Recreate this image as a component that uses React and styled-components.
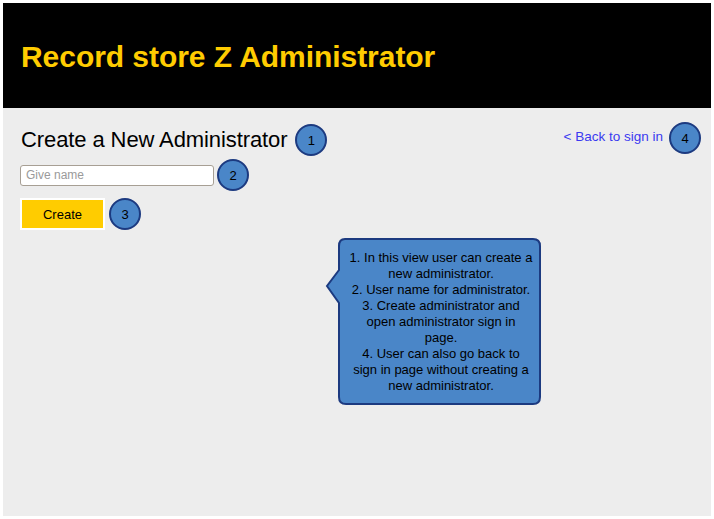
import React from 'react';
import styled, { createGlobalStyle } from 'styled-components';

const GlobalStyle = createGlobalStyle`
  html, body {
    margin: 0;
    padding: 0;
    background: #ffffff;
    font-family: "Liberation Sans", Arial, sans-serif;
  }
`;

const Page = styled.div`
  margin: 3px;
  width: 708px;
  height: 513px;
  background: #ededed;
  display: flex;
  flex-direction: column;
`;

const Header = styled.header`
  height: 105px;
  background: #000000;
  display: flex;
  align-items: center;
  padding: 0 18px;
`;

const Title = styled.h1`
  margin: 0;
  padding-top: 3px;
  color: #ffcc00;
  font-size: 30px;
  font-weight: bold;
  letter-spacing: -0.05px;
`;

const Main = styled.main`
  position: relative;
  flex: 1;
  padding: 14px 10px 0 17px;
`;

const TopRow = styled.div`
  display: flex;
  justify-content: space-between;
  align-items: flex-start;
`;

const Group = styled.div`
  display: flex;
  align-items: center;
  gap: ${p => p.gap || 8}px;
  margin-top: ${p => p.top || 0}px;
`;

const Heading = styled.h2`
  margin: 0 0 0 1px;
  font-size: 22px;
  font-weight: normal;
  letter-spacing: -0.1px;
  color: #000000;
`;

const Badge = styled.span`
  box-sizing: border-box;
  width: 32px;
  height: 32px;
  border-radius: 50%;
  background: #4a86c8;
  border: 2px solid #1c3a80;
  display: inline-flex;
  align-items: center;
  justify-content: center;
  font-size: 13px;
  color: #000000;
  flex-shrink: 0;
`;

const BackLink = styled.a`
  color: #3a3af0;
  font-size: 13.5px;
  text-decoration: none;
  cursor: pointer;
  margin-top: -3px;
`;

const NameInput = styled.input`
  box-sizing: border-box;
  width: 194px;
  height: 21px;
  border: 1px solid #a79f94;
  border-radius: 3px;
  background: #ffffff;
  padding: 0 5px;
  font-family: "Liberation Sans", Arial, sans-serif;
  font-size: 12px;
  &::placeholder {
    color: #9a9a9a;
  }
`;

const CreateButton = styled.button`
  box-sizing: border-box;
  width: 85px;
  height: 32px;
  background: #ffcc00;
  border: 2px solid #ffffff;
  font-family: "Liberation Sans", Arial, sans-serif;
  font-size: 13px;
  color: #000000;
  cursor: pointer;
`;

const Callout = styled.div`
  position: absolute;
  left: 336px;
  top: 130px;
  width: 202px;
  height: 167px;
  box-sizing: border-box;
  display: flex;
  align-items: center;
  justify-content: center;
`;

const CalloutShape = styled.svg`
  position: absolute;
  left: -14px;
  top: 0;
  overflow: visible;
`;

const CalloutText = styled.p`
  position: relative;
  margin: 0 0 0 2px;
  text-align: center;
  font-size: 13px;
  line-height: 16px;
  color: #000000;
  white-space: nowrap;
`;

const notes = [
  '1. In this view user can create a',
  'new administrator.',
  '2. User name for administrator.',
  '3. Create administrator and',
  'open administrator sign in',
  'page.',
  '4. User can also go back to',
  'sign in page without creating a',
  'new administrator.',
];

export default function App() {
  return (
    <>
      <GlobalStyle />
      <Page>
        <Header>
          <Title>Record store Z Administrator</Title>
        </Header>
        <Main>
          <TopRow>
            <Group gap={8} top={2}>
              <Heading>Create a New Administrator</Heading>
              <Badge>1</Badge>
            </Group>
            <Group gap={6} top={0}>
              <BackLink>&lt; Back to sign in</BackLink>
              <Badge>4</Badge>
            </Group>
          </TopRow>
          <Group gap={3} top={3}>
            <NameInput placeholder="Give name" />
            <Badge>2</Badge>
          </Group>
          <Group gap={4} top={7}>
            <CreateButton>Create</CreateButton>
            <Badge>3</Badge>
          </Group>
          <Callout>
            <CalloutShape width="216" height="167" viewBox="0 0 216 167">
              <path
                d="M20 1 H208 Q215 1 215 8 V159 Q215 166 208 166 H21 Q14 166 14 159 V65 L2 48 L14 32 V8 Q14 1 20 1 Z"
                fill="#4a86c8"
                stroke="#1c3a80"
                strokeWidth="2"
              />
            </CalloutShape>
            <CalloutText>
              {notes.map((line, i) => (
                <React.Fragment key={i}>
                  {line}
                  {i < notes.length - 1 && <br />}
                </React.Fragment>
              ))}
            </CalloutText>
          </Callout>
        </Main>
      </Page>
    </>
  );
}
